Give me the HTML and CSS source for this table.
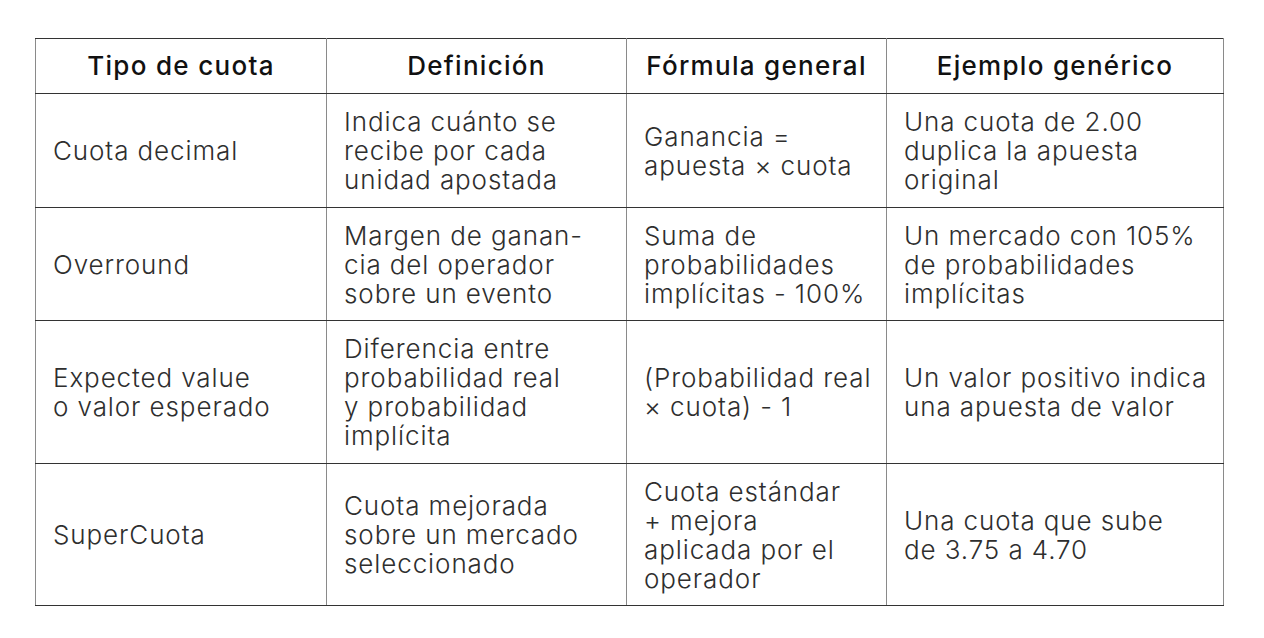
FILE: index.html
```html
<!DOCTYPE html>
<html lang="es">
<head>
<meta charset="utf-8">
<link rel="stylesheet" href="styles.css">
</head>
<body>
<table class="odds">
  <colgroup>
    <col class="c1"><col class="c2"><col class="c3"><col class="c4">
  </colgroup>
  <thead>
    <tr>
      <th>Tipo de cuota</th>
      <th>Definición</th>
      <th>Fórmula general</th>
      <th>Ejemplo genérico</th>
    </tr>
  </thead>
  <tbody>
    <tr>
      <td>Cuota decimal</td>
      <td>Indica cuánto se<br>recibe por cada<br>unidad apostada</td>
      <td>Ganancia =<br>apuesta × cuota</td>
      <td>Una cuota de 2.00<br>duplica la apuesta<br>original</td>
    </tr>
    <tr>
      <td>Overround</td>
      <td>Margen de ganan-<br>cia del operador<br>sobre un evento</td>
      <td>Suma de<br>probabilidades<br>implícitas - 100%</td>
      <td>Un mercado con 105%<br>de probabilidades<br>implícitas</td>
    </tr>
    <tr>
      <td>Expected value<br>o valor esperado</td>
      <td>Diferencia entre<br>probabilidad real<br>y probabilidad<br>implícita</td>
      <td>(Probabilidad real<br>× cuota) - 1</td>
      <td>Un valor positivo indica<br>una apuesta de valor</td>
    </tr>
    <tr>
      <td>SuperCuota</td>
      <td>Cuota mejorada<br>sobre un mercado<br>seleccionado</td>
      <td>Cuota estándar<br>+ mejora<br>aplicada por el<br>operador</td>
      <td>Una cuota que sube<br>de 3.75 a 4.70</td>
    </tr>
  </tbody>
</table>
</body>
</html>
```
FILE: styles.css
```css
html, body {
  margin: 0;
  padding: 0;
  background: #ffffff;
}

body {
  padding: 38px 0 0 35px;
  font-family: Inter, Roboto, "Liberation Sans", sans-serif;
}

.odds {
  border-collapse: collapse;
  table-layout: fixed;
  width: 1188px;
  color: #2e2e2e;
}

.c1 { width: 291px; }
.c2 { width: 300px; }
.c3 { width: 260px; }
.c4 { width: 337px; }

.odds th,
.odds td {
  border-top: 1px solid #333333;
  border-bottom: 1px solid #333333;
  border-left: 1px solid #8a8a8a;
  border-right: 1px solid #8a8a8a;
  vertical-align: middle;
  white-space: nowrap;
}

.odds th {
  font-weight: 500;
  font-size: 26px;
  line-height: 28px;
  letter-spacing: 1.3px;
  padding: 13px 4px;
  text-align: center;
  color: #111111;
}

.odds td {
  font-weight: 300;
  font-size: 26px;
  line-height: 29px;
  letter-spacing: 0.9px;
  padding: 13px 14px 12.5px 17px;
  text-align: left;
}
```
